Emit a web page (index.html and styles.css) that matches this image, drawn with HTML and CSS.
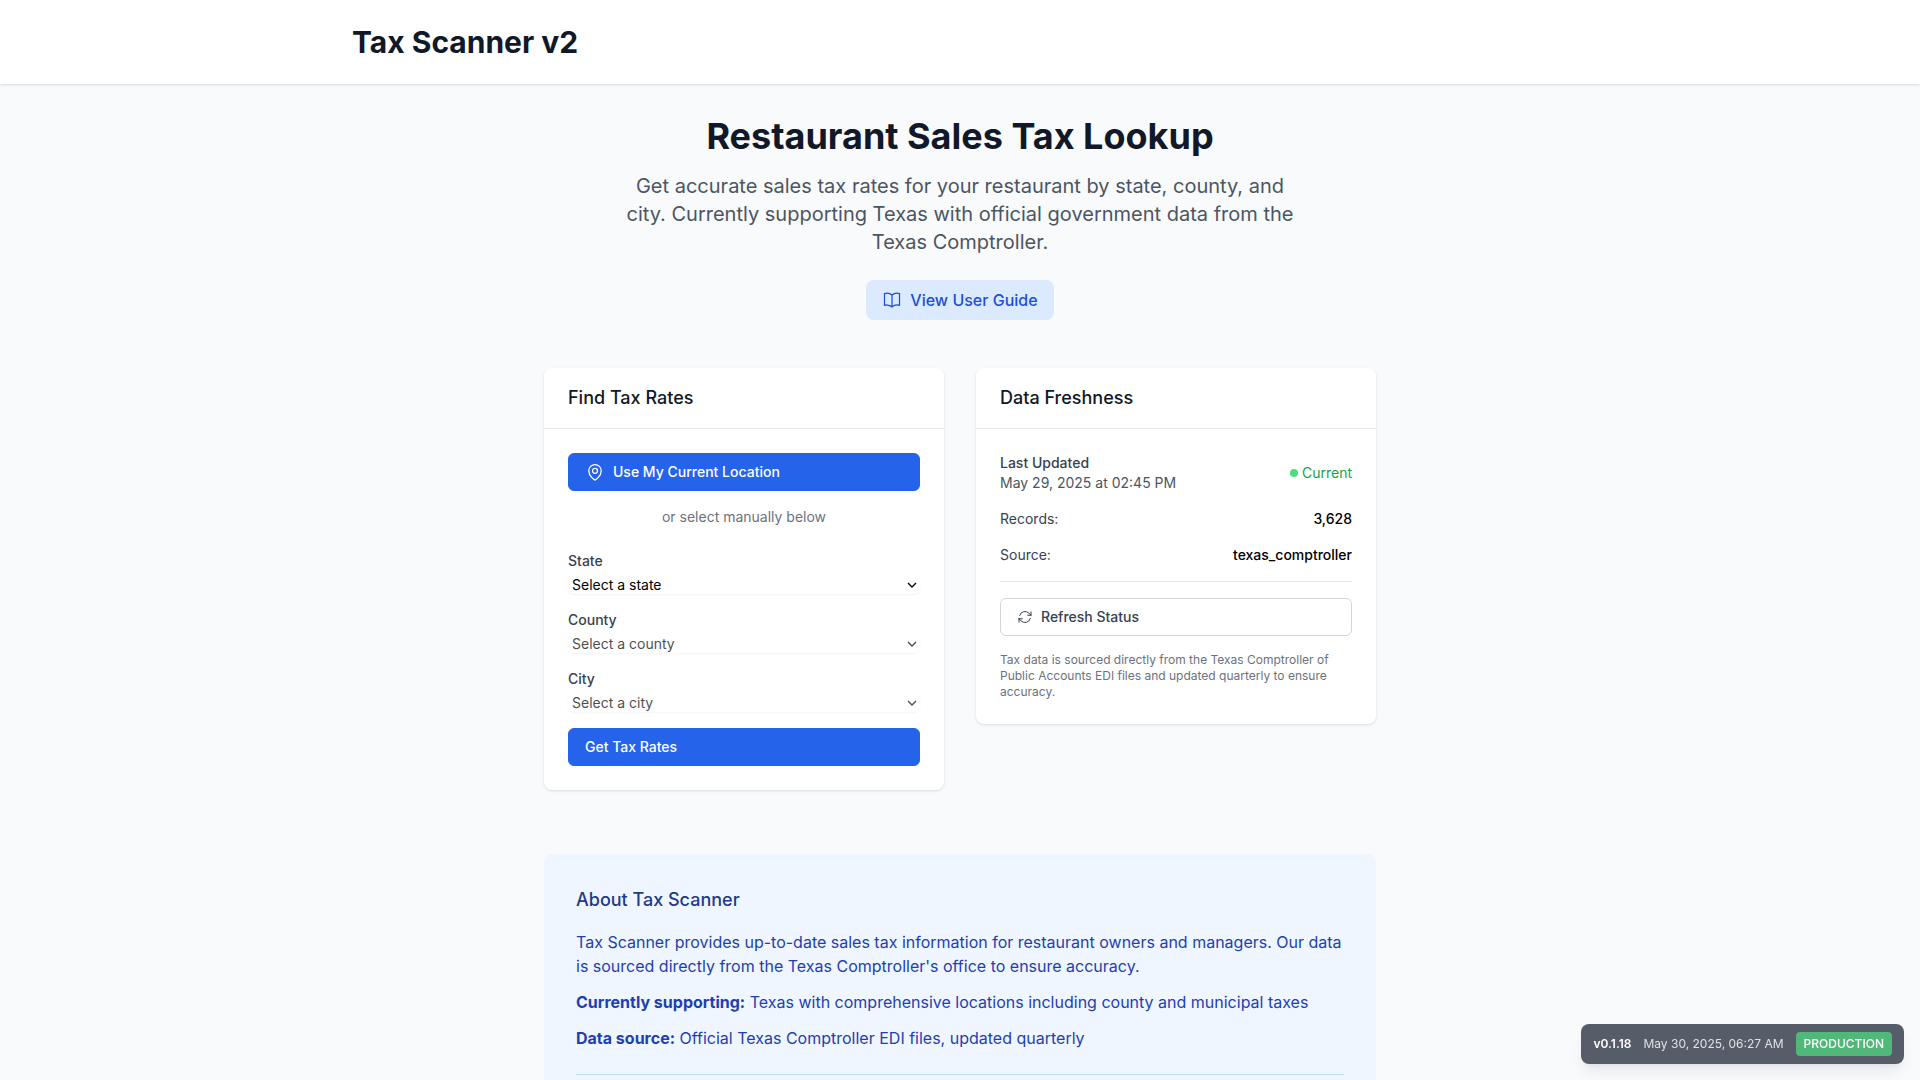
FILE: index.html
```html
<!DOCTYPE html>
<html lang="en">
<head>
<meta charset="utf-8">
<meta name="viewport" content="width=device-width, initial-scale=1">
<title>Tax Scanner v2</title>
<link rel="stylesheet" href="styles.css">
</head>
<body>
<header class="site-header">
  <div class="site-header-inner">
    <h1 class="brand">Tax Scanner v2</h1>
  </div>
</header>

<main class="main">
  <section class="hero">
    <h2 class="hero-title">Restaurant Sales Tax Lookup</h2>
    <p class="hero-text">Get accurate sales tax rates for your restaurant by state, county, and city. Currently supporting Texas with official government data from the Texas Comptroller.</p>
    <a class="guide-link" href="#guide">
      <svg class="icon" viewBox="0 0 24 24" aria-hidden="true"><path d="M12 6.042A8.967 8.967 0 0 0 6 3.75c-1.052 0-2.062.18-3 .512v14.25A8.987 8.987 0 0 1 6 18c2.305 0 4.408.867 6 2.292m0-14.25a8.966 8.966 0 0 1 6-2.292c1.052 0 2.062.18 3 .512v14.25A8.987 8.987 0 0 0 18 18a8.967 8.967 0 0 0-6 2.292m0-14.25v14.25"/></svg>
      View User Guide
    </a>
  </section>

  <div class="cards">
    <section class="card">
      <h3 class="card-title">Find Tax Rates</h3>
      <form class="card-body" onsubmit="return false">
        <button class="btn btn-primary" type="button">
          <svg class="icon" viewBox="0 0 24 24" aria-hidden="true"><path d="M15 10.5a3 3 0 1 1-6 0 3 3 0 0 1 6 0Z"/><path d="M19.5 10.5c0 7.142-7.5 11.25-7.5 11.25S4.5 17.642 4.5 10.5a7.5 7.5 0 1 1 15 0Z"/></svg>
          Use My Current Location
        </button>
        <p class="divider-text">or select manually below</p>
        <div class="fields">
          <div class="field">
            <label class="label" for="state">State</label>
            <div class="select-wrap">
              <select class="select" id="state"><option>Select a state</option><option>Texas</option></select>
              <svg class="chevron" viewBox="0 0 10 6" aria-hidden="true"><path d="M1 1l4 4 4-4"/></svg>
            </div>
          </div>
          <div class="field">
            <label class="label" for="county">County</label>
            <div class="select-wrap is-disabled">
              <select class="select" id="county" disabled><option>Select a county</option></select>
              <svg class="chevron" viewBox="0 0 10 6" aria-hidden="true"><path d="M1 1l4 4 4-4"/></svg>
            </div>
          </div>
          <div class="field">
            <label class="label" for="city">City</label>
            <div class="select-wrap is-disabled">
              <select class="select" id="city" disabled><option>Select a city</option></select>
              <svg class="chevron" viewBox="0 0 10 6" aria-hidden="true"><path d="M1 1l4 4 4-4"/></svg>
            </div>
          </div>
          <button class="btn btn-primary" type="submit">Get Tax Rates</button>
        </div>
      </form>
    </section>

    <section class="card">
      <h3 class="card-title">Data Freshness</h3>
      <div class="card-body freshness">
        <div class="row">
          <div>
            <p class="label">Last Updated</p>
            <p class="muted">May 29, 2025 at 02:45 PM</p>
          </div>
          <span class="status"><span class="status-dot"></span>Current</span>
        </div>
        <div class="row"><span class="muted-dark">Records:</span><span class="value">3,628</span></div>
        <div class="row"><span class="muted-dark">Source:</span><span class="value">texas_comptroller</span></div>
        <div class="refresh">
          <button class="btn btn-outline" type="button">
            <svg class="icon icon-small" viewBox="0 0 24 24" aria-hidden="true"><path d="M16.023 9.348h4.992v-.001M2.985 19.644v-4.992m0 0h4.992m-4.993 0 3.181 3.183a8.25 8.25 0 0 0 13.803-3.7M4.031 9.865a8.25 8.25 0 0 1 13.803-3.7l3.181 3.182m0-4.991v4.99"/></svg>
            Refresh Status
          </button>
        </div>
        <p class="note">Tax data is sourced directly from the Texas Comptroller of Public Accounts EDI files and updated quarterly to ensure accuracy.</p>
      </div>
    </section>
  </div>

  <section class="about">
    <h3 class="about-title">About Tax Scanner</h3>
    <div class="about-text">
      <p>Tax Scanner provides up-to-date sales tax information for restaurant owners and managers. Our data is sourced directly from the Texas Comptroller's office to ensure accuracy.</p>
      <p><strong>Currently supporting:</strong> Texas with comprehensive locations including county and municipal taxes</p>
      <p><strong>Data source:</strong> Official Texas Comptroller EDI files, updated quarterly</p>
    </div>
    <div class="about-footer"></div>
  </section>
</main>

<aside class="version">
  <span class="version-number">v0.1.18</span>
  <span class="version-date">May 30, 2025, 06:27 AM</span>
  <span class="version-env">PRODUCTION</span>
</aside>
</body>
</html>
```
FILE: styles.css
```css
* {
  box-sizing: border-box;
  margin: 0;
}

body {
  background: #f9fafb;
  color: #000;
  font-family: Inter, "Liberation Sans", sans-serif;
  font-size: 16px;
  line-height: 24px;
}

.site-header {
  background: #fff;
  box-shadow: 0 1px 3px rgba(0, 0, 0, 0.1), 0 1px 2px -1px rgba(0, 0, 0, 0.1);
}

.site-header-inner {
  max-width: 1280px;
  margin: 0 auto;
  padding: 24px 32px;
}

.brand {
  color: #111827;
  font-size: 30px;
  font-weight: 700;
  line-height: 36px;
}

.main {
  max-width: 896px;
  margin: 0 auto;
  padding: 32px;
}

.hero {
  display: flex;
  flex-direction: column;
  align-items: center;
  text-align: center;
}

.hero-title {
  color: #111827;
  font-size: 36px;
  font-weight: 700;
  line-height: 40px;
}

.hero-text {
  max-width: 672px;
  margin-top: 16px;
  color: #4b5563;
  font-size: 20px;
  line-height: 28px;
}

.guide-link {
  display: inline-flex;
  align-items: center;
  gap: 8px;
  margin-top: 24px;
  padding: 8px 16px;
  border-radius: 8px;
  background: #dbeafe;
  color: #1d4ed8;
  font-weight: 500;
  text-decoration: none;
}

.icon {
  flex: none;
  width: 20px;
  height: 20px;
  fill: none;
  stroke: currentColor;
  stroke-width: 1.5;
  stroke-linecap: round;
  stroke-linejoin: round;
}

.icon-small {
  width: 16px;
  height: 16px;
}

.cards {
  display: grid;
  grid-template-columns: repeat(auto-fit, minmax(320px, 1fr));
  align-items: start;
  gap: 32px;
  margin-top: 48px;
}

.card {
  border-radius: 8px;
  background: #fff;
  box-shadow: 0 1px 3px rgba(0, 0, 0, 0.1), 0 1px 2px -1px rgba(0, 0, 0, 0.1);
}

.card-title {
  padding: 16px 24px;
  border-bottom: 1px solid #e5e7eb;
  color: #111827;
  font-size: 18px;
  font-weight: 500;
  line-height: 28px;
}

.card-body {
  padding: 24px;
  font-size: 14px;
  line-height: 20px;
}

.btn {
  display: flex;
  align-items: center;
  gap: 8px;
  width: 100%;
  padding: 8px 16px;
  border: 1px solid transparent;
  border-radius: 6px;
  font-family: inherit;
  font-size: 14px;
  font-weight: 500;
  line-height: 20px;
}

.btn-primary {
  background: #2563eb;
  border-color: #2563eb;
  color: #fff;
}

.btn-outline {
  background: #fff;
  border-color: #d1d5db;
  color: #374151;
}

.divider-text {
  margin-top: 16px;
  color: #6b7280;
  text-align: center;
}

.fields {
  display: grid;
  gap: 16px;
  margin-top: 24px;
}

.field {
  display: grid;
  gap: 4px;
}

.label {
  color: #374151;
  font-weight: 500;
}

.select-wrap {
  display: grid;
  align-items: center;
}

.select-wrap.is-disabled {
  opacity: 0.7;
}

.select {
  grid-area: 1 / 1;
  appearance: none;
  width: 100%;
  height: 19px;
  padding: 0 16px 0 4px;
  border: 0;
  border-radius: 6px;
  background: #fff;
  box-shadow: 0 1px 2px rgba(0, 0, 0, 0.05);
  color: #000;
  font-family: inherit;
  font-size: 14px;
}

.select:disabled {
  opacity: 1;
}

.chevron {
  grid-area: 1 / 1;
  justify-self: end;
  width: 10px;
  height: 6px;
  margin-right: 3px;
  fill: none;
  stroke: #000;
  stroke-width: 1.3;
  pointer-events: none;
}

.freshness {
  display: grid;
  gap: 16px;
}

.row {
  display: flex;
  align-items: center;
  justify-content: space-between;
}

.muted {
  color: #4b5563;
}

.muted-dark {
  color: #374151;
}

.value {
  font-weight: 500;
}

.status {
  display: flex;
  align-items: center;
  gap: 4px;
  color: #16a34a;
}

.status-dot {
  width: 8px;
  height: 8px;
  border-radius: 50%;
  background: #4ade80;
}

.refresh {
  padding-top: 16px;
  border-top: 1px solid #e5e7eb;
}

.note {
  color: #6b7280;
  font-size: 12px;
  line-height: 16px;
}

.about {
  margin-top: 64px;
  padding: 32px;
  border-radius: 8px;
  background: #eff6ff;
}

.about-title {
  color: #1e3a8a;
  font-size: 18px;
  font-weight: 500;
  line-height: 28px;
}

.about-text {
  display: grid;
  gap: 12px;
  margin-top: 16px;
  color: #1e40af;
}

.about-footer {
  margin-top: 24px;
  border-top: 1px solid #bfdbfe;
}

.version {
  position: fixed;
  right: 16px;
  bottom: 16px;
  display: flex;
  align-items: center;
  gap: 12px;
  padding: 8px 12px;
  border-radius: 8px;
  background: #565d69;
  box-shadow: 0 10px 15px -3px rgba(0, 0, 0, 0.08), 0 4px 6px -4px rgba(0, 0, 0, 0.08);
  color: #fff;
  font-size: 12px;
  line-height: 16px;
}

.version-number {
  font-weight: 600;
}

.version-date {
  color: #dfe1e4;
}

.version-env {
  padding: 4px 8px;
  border-radius: 4px;
  background: #50b878;
  font-weight: 500;
}
```
